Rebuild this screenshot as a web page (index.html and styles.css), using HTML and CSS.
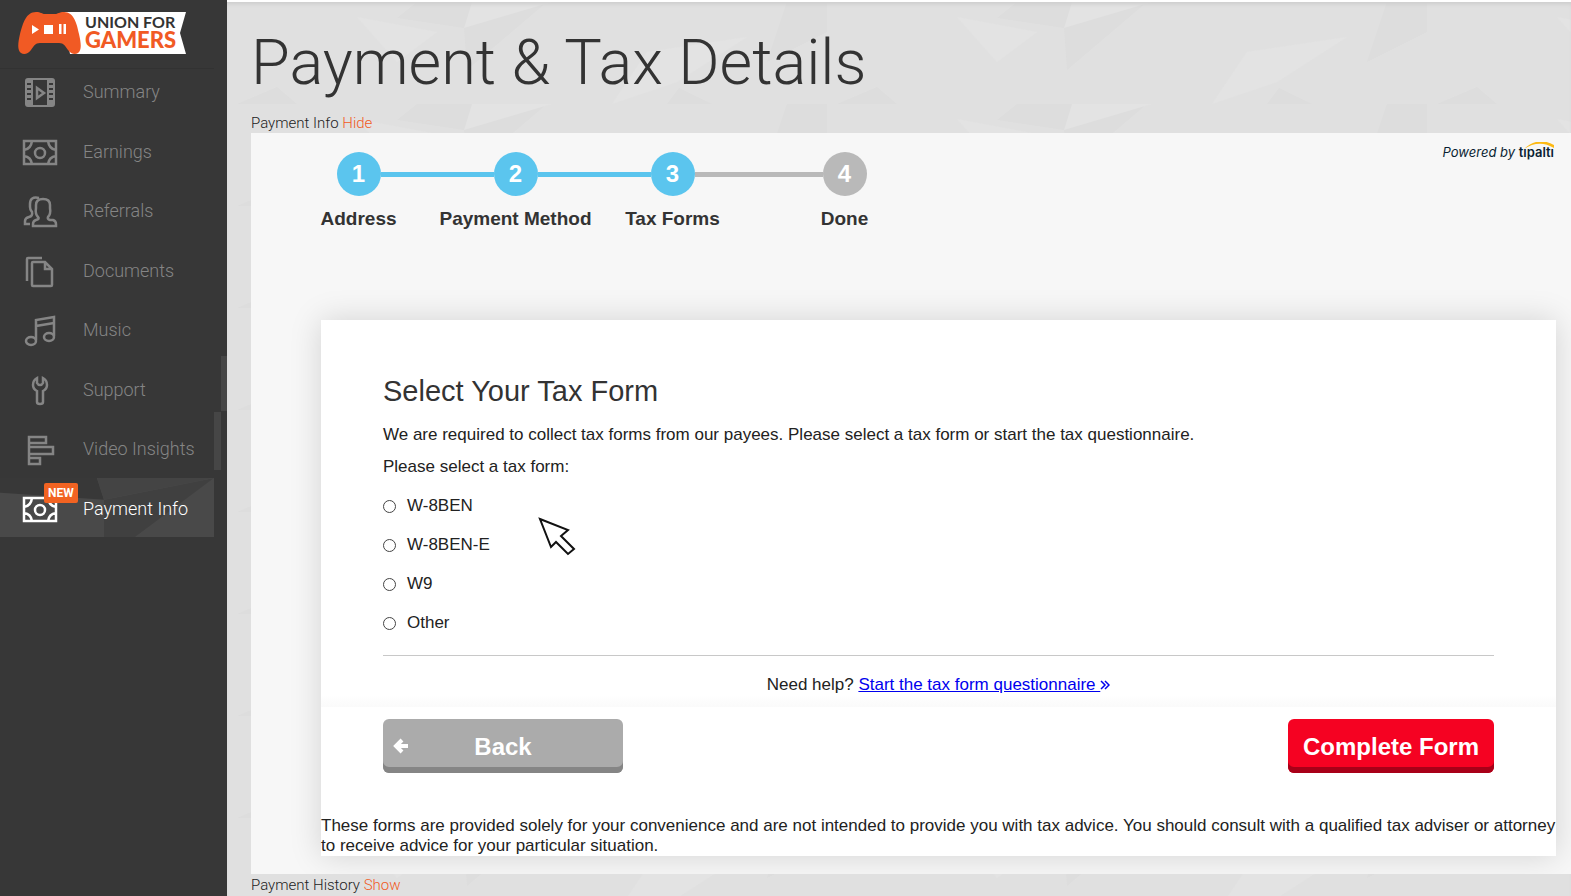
FILE: index.html
```html
<!DOCTYPE html>
<html lang="en">
<head>
    <meta charset="UTF-8">
    <meta name="viewport" content="width=device-width, initial-scale=1.0">
    <title>Payment &amp; Tax Details - Union for Gamers</title>
    <link rel="stylesheet" href="styles.css">
</head>
<body>
    <aside class="sidebar">
        <a class="logo" href="#" aria-label="Union for Gamers">
            <svg width="168" height="42" viewBox="0 0 168 42">
                <path d="M44 0H168L162 21L168 42H52Z" fill="#fff"/>
                <path d="M18 0C23 0 24 2 27 2H37C40 2 41 0 46 0C56 0 59 12 61 22C63 31 64 38 60 41C57 43 53 42 50 38C47 34 46 31 41 31H22C17 31 16 34 13 38C10 42 6 43 3 41C-1 38 0 31 2 22C5 11 8 0 18 0Z" fill="#f15a24"/>
                <path d="M14 13V22L21 17.500Z M26 13H35V22H26Z M41 12H43.500V22H41Z M45.500 12H48V22H45.500Z" fill="#fff"/>
                <text class="logo-top" x="67" y="16">UNION FOR</text>
                <text class="logo-bottom" x="67" y="36">GAMERS</text>
            </svg>
        </a>
        <nav>
            <ul class="menu">
                <li><a href="#">
                    <svg class="icon" viewBox="0 0 36 36">
                        <path fill="currentColor" fill-rule="evenodd" d="M6 3H30Q33 3 33 6V29Q33 32 30 32H6Q3 32 3 29V6Q3 3 6 3ZM11 5V30H25V5ZM5 8V10H9V8ZM5 13V15H9V13ZM5 18V20H9V18ZM5 23V25H9V23ZM27 8V10H31V8ZM27 13V15H31V13ZM27 18V20H31V18ZM27 23V25H31V23Z"/>
                        <path d="M15 13V23L22 18Z"/>
                    </svg>
                    <span>Summary</span></a></li>
                <li><a href="#">
                    <svg class="icon" viewBox="0 0 36 36">
                        <path d="M2 6H34V29H2ZM2 15Q9 14 10 6M2 21Q9 22 10 29M34 15Q27 14 26 6M34 21Q27 22 26 29"/>
                        <circle cx="18" cy="18" r="5"/>
                    </svg>
                    <span>Earnings</span></a></li>
                <li><a href="#">
                    <svg class="icon" viewBox="0 0 36 36">
                        <path d="M16 23Q13 20 14 14V11Q14 5 21 5Q28 5 28 11V14Q29 20 26 23Q25 25 28 26H31Q34 27 34 30V32H11V30Q11 27 14 26Q18 25 16 23ZM17 4Q8 2 8 10V13Q8 16 10 18Q11 22 7 23Q3 24 3 27V30H8"/>
                    </svg>
                    <span>Referrals</span></a></li>
                <li><a href="#">
                    <svg class="icon" viewBox="0 0 36 36">
                        <path d="M10 9Q10 8 11 8H23L30 15V31Q30 32 29 32H11Q10 32 10 31ZM23 8V15H30M5 27V5Q5 4 6 4H20"/>
                    </svg>
                    <span>Documents</span></a></li>
                <li><a href="#">
                    <svg class="icon" viewBox="0 0 36 36">
                        <path d="M14 27V7L32 4V23M14 13L32 10"/>
                        <ellipse cx="9" cy="28" rx="5" ry="4"/>
                        <ellipse cx="27" cy="24" rx="5" ry="4"/>
                    </svg>
                    <span>Music</span></a></li>
                <li class="edge-outer"><a href="#">
                    <svg class="icon" viewBox="0 0 36 36">
                        <path d="M15 5Q11 7 11 12Q11 16 15 18V29Q15 31 18 31Q21 31 21 29V18Q25 16 25 12Q25 7 21 5V10Q20 12 18 12Q16 12 15 10Z"/>
                    </svg>
                    <span>Support</span></a></li>
                <li class="edge-inner"><a href="#">
                    <svg class="icon" viewBox="0 0 36 36">
                        <path d="M7 5H24V11H7ZM7 15H31V22H7ZM7 26H18V32H7ZM7 5V32"/>
                    </svg>
                    <span>Video Insights</span></a></li>
                <li class="active"><a href="#">
                    <svg class="icon" viewBox="0 0 36 36">
                        <path d="M2 6H34V29H2ZM2 15Q9 14 10 6M2 21Q9 22 10 29M34 15Q27 14 26 6M34 21Q27 22 26 29"/>
                        <circle cx="18" cy="18" r="5"/>
                    </svg>
                    <span>Payment Info</span>
                    <b class="badge">NEW</b></a></li>
            </ul>
        </nav>
    </aside>

    <main class="content">
        <h1>Payment &amp; Tax Details</h1>
        <p class="toggle">Payment Info <a href="#">Hide</a></p>
        <section class="panel">
            <div class="panel-top">
                <ol class="steps">
                    <li class="done"><div class="track"><span>1</span></div>Address</li>
                    <li class="done"><div class="track"><span>2</span></div>Payment Method</li>
                    <li class="current"><div class="track"><span>3</span></div>Tax Forms</li>
                    <li><div class="track"><span>4</span></div>Done</li>
                </ol>
                <div class="powered">Powered by <b>tıpaltı</b>
                    <svg width="30" height="7" viewBox="0 0 30 7"><path d="M0 7Q14 -6 30 3V6Q15 -3 0 7Z" fill="#fdb913"/></svg>
                </div>
            </div>

            <form class="card">
                <div class="card-body">
                    <h2>Select Your Tax Form</h2>
                    <p>We are required to collect tax forms from our payees. Please select a tax form or start the tax questionnaire.</p>
                    <p>Please select a tax form:</p>
                    <div class="options">
                        <label><input type="radio" name="taxform"> W-8BEN</label>
                        <label><input type="radio" name="taxform"> W-8BEN-E</label>
                        <label><input type="radio" name="taxform"> W9</label>
                        <label><input type="radio" name="taxform"> Other</label>
                        <svg class="pointer" width="38" height="40" viewBox="0 0 38 40"><path d="M2 2L30 13L23 19L36 32L30 37L18 25L13 30Z"/></svg>
                    </div>
                    <p class="help">Need help? <a href="#">Start the tax form questionnaire <svg width="10" height="10" viewBox="0 0 10 10"><path d="M1 1L5 5L1 9M5 1L9 5L5 9"/></svg></a></p>
                </div>
                <div class="actions">
                    <button type="button" class="back">
                        <svg width="16" height="16" viewBox="0 0 16 16"><path d="M9 2L3 8L9 14M3 8H15"/></svg>
                        <span>Back</span>
                    </button>
                    <button type="submit" class="complete">Complete Form</button>
                </div>
                <p class="disclaimer">These forms are provided solely for your convenience and are not intended to provide you with tax advice. You should consult with a qualified tax adviser or attorney to receive advice for your particular situation.</p>
            </form>
        </section>
        <p class="toggle history">Payment History <a href="#">Show</a></p>
    </main>
</body>
</html>
```

FILE: styles.css
```css
/* Global Styles */
* {
    box-sizing: border-box;
}
body {
    margin: 0;
    min-height: 100vh;
    display: flex;
    font-family: "Liberation Sans", Arial, sans-serif;
    font-size: 17px;
    color: #222;
    background: #e0e0e0;
}
h1, h2, p, ul, ol {
    margin: 0;
    padding: 0;
    font-weight: normal;
}
ul, ol {
    list-style: none;
}

/* Sidebar */
.sidebar {
    width: 227px;
    flex-shrink: 0;
    background: #373737;
}
.logo {
    display: block;
    height: 61px;
    padding: 12px 18px 0;
}
.logo-top, .logo-bottom {
    font-family: Lato, sans-serif;
    font-weight: bold;
}
.logo-top {
    font-size: 16px;
    fill: #333;
}
.logo-bottom {
    font-size: 22px;
    font-weight: 900;
    fill: #f15a24;
}
.menu {
    height: 476px;
    width: 214px;
    display: flex;
    flex-direction: column;
}
.menu li {
    flex: 1;
    position: relative;
}
.menu li:first-child {
    background: linear-gradient(#323232, #323232) 0 7px / 100% 1px no-repeat;
}
.menu a {
    height: 100%;
    display: flex;
    align-items: center;
    gap: 25px;
    padding: 2px 0 0 22px;
    font-family: Roboto, sans-serif;
    font-weight: 300;
    font-size: 18px;
    color: #858585;
    text-decoration: none;
}
.icon {
    width: 36px;
    height: 36px;
    margin-top: 3px;
    fill: none;
    stroke: currentColor;
    stroke-width: 2.5;
}
.icon path[fill] {
    stroke: none;
}
.menu .active {
    background: url("data:image/svg+xml,%3Csvg xmlns='http://www.w3.org/2000/svg' viewBox='0 0 214 60' preserveAspectRatio='none'%3E%3Cpath fill='%23494949' d='M0 0H214V60H0z'/%3E%3Cpath fill='%23383838' d='M0 0H97L104 22L0 15z'/%3E%3Cpath fill='%23404040' d='M104 22L214 0L135 60H104z'/%3E%3Cpath fill='%23444' d='M97 0H214L104 22z'/%3E%3C/svg%3E") 0 0 / 100% 100%;
}
.menu .active a {
    color: #fff;
}
.badge {
    position: absolute;
    left: 44px;
    top: 5px;
    padding: 0 4px;
    border-radius: 2px;
    background: #f26322;
    font-size: 12px;
    font-weight: bold;
    line-height: 20px;
    color: #fff;
}
.edge-outer::after, .edge-inner::after {
    content: "";
    position: absolute;
    top: -3px;
    left: 100%;
    width: 7px;
    height: 55px;
    background: #464646;
}
.edge-outer::after {
    left: calc(100% + 7px);
    width: 6px;
}
.edge-inner::after {
    top: -6px;
    height: 58px;
}

/* Main column */
.content {
    flex: 1;
    min-width: 0;
    padding-left: 24px;
    border-top: 2px solid #fff;
    background: url("data:image/svg+xml,%3Csvg xmlns='http://www.w3.org/2000/svg' width='600' height='102'%3E%3Cpath fill='%23dddddd' d='M190 0L245 0L237 26L170 16zM237 26L240 68L320 0H245zM10 102L50 85L70 102z'/%3E%3Cpath fill='%23e3e3e3' d='M245 0H325L237 26zM130 15L210 30L170 60zM385 102L420 50L520 35L450 80z'/%3E%3Cpath fill='%23dddddd' d='M560 0H600V30L540 60zM440 102L452 86L485 102z'/%3E%3C/svg%3E") #e0e0e0;
    box-shadow: inset 0 4px 4px -2px #ccc;
}
h1 {
    height: 102px;
    padding-top: 25px;
    font-family: Roboto, sans-serif;
    font-weight: 300;
    font-size: 63px;
    line-height: 72px;
    color: #333;
}
.toggle {
    padding: 9px 0 0;
    font-family: Roboto, sans-serif;
    font-weight: 300;
    font-size: 15px;
    line-height: 20px;
    color: #222;
}
.toggle a {
    color: #f15a24;
    text-decoration: none;
}
.history {
    padding-top: 1px;
}
.panel {
    padding: 19px 15px 18px 70px;
    background: #f7f7f7;
    overflow: hidden;
}
.panel-top {
    display: flex;
    justify-content: space-between;
    margin-bottom: 90px;
}

/* Steps */
.steps {
    display: grid;
    grid-template-columns: 157px 157px 157px 187px;
    margin-left: -41px;
    font-size: 19px;
    font-weight: bold;
    line-height: 22px;
    text-align: center;
    color: #333;
}
.track {
    display: flex;
    align-items: center;
    margin-bottom: 12px;
}
.track::before, .track::after {
    content: "";
    flex: 1;
    height: 5px;
    background: #b9b9b9;
}
.track span {
    width: 44px;
    border-radius: 50%;
    background: #b9b9b9;
    font-size: 24px;
    line-height: 44px;
    color: #fff;
}
.done .track::before, .done .track::after, .done span,
.current .track::before, .current span {
    background: #5bc5ee;
}
.steps li:first-child .track::before, .steps li:last-child .track::after {
    background: none;
}
.powered {
    position: relative;
    margin: -8px 2px 0 0;
    font-family: Inter, sans-serif;
    font-size: 13px;
    font-style: italic;
    line-height: 16px;
    color: #0a1f33;
}
.powered b {
    font-style: normal;
    font-weight: 600;
}
.powered svg {
    position: absolute;
    right: 0;
    top: -2px;
}

/* Tax form card */
.card {
    background: #fff;
    box-shadow: 0 0 30px rgba(0, 0, 0, 0.15);
}
.card-body {
    padding: 52px 62px 12px;
    background: linear-gradient(to top, #fafafa, #fff 12px);
}
h2 {
    margin-bottom: 14px;
    font-size: 29px;
    line-height: 39px;
    color: #333;
}
.card-body p {
    margin-bottom: 12px;
    line-height: 20px;
}
.options {
    position: relative;
    display: flex;
    flex-direction: column;
    align-items: flex-start;
    gap: 19px;
    padding: 7px 0 22px;
    border-bottom: 1px solid #c8c8c8;
}
.options label {
    display: flex;
    align-items: center;
    gap: 11px;
    line-height: 20px;
}
.options input {
    appearance: none;
    width: 13px;
    height: 13px;
    margin: 0;
    border: 1px solid #444;
    border-radius: 50%;
    background: #fff;
}
.options input:checked {
    background: radial-gradient(#444 40%, #fff 50%);
}
.pointer {
    position: absolute;
    left: 155px;
    top: 28px;
    fill: #fff;
    stroke: #111;
    stroke-width: 2;
}
.card-body .help {
    margin: 19px 0 0;
    text-align: center;
}
.help a {
    color: #0000ee;
}
.help svg {
    fill: none;
    stroke: #0000ee;
    stroke-width: 1.5;
}

/* Buttons */
.actions {
    display: flex;
    justify-content: space-between;
    padding: 12px 62px 43px;
}
.actions button {
    height: 54px;
    padding: 2px 15px 0;
    border: none;
    border-radius: 6px;
    font-family: inherit;
    font-size: 24px;
    font-weight: bold;
    color: #fff;
    cursor: pointer;
}
.actions .back {
    width: 240px;
    display: flex;
    align-items: center;
    padding: 0 10px;
    background: #ababab;
    box-shadow: inset 0 -6px #858585;
}
.back svg {
    fill: none;
    stroke: #fff;
    stroke-width: 4;
}
.back span {
    flex: 1;
    padding: 2px 16px 0 0;
    text-align: center;
}
.actions .complete {
    background: #f50222;
    box-shadow: inset 0 -6px #a80018;
}
.disclaimer {
    line-height: 20px;
}
```
